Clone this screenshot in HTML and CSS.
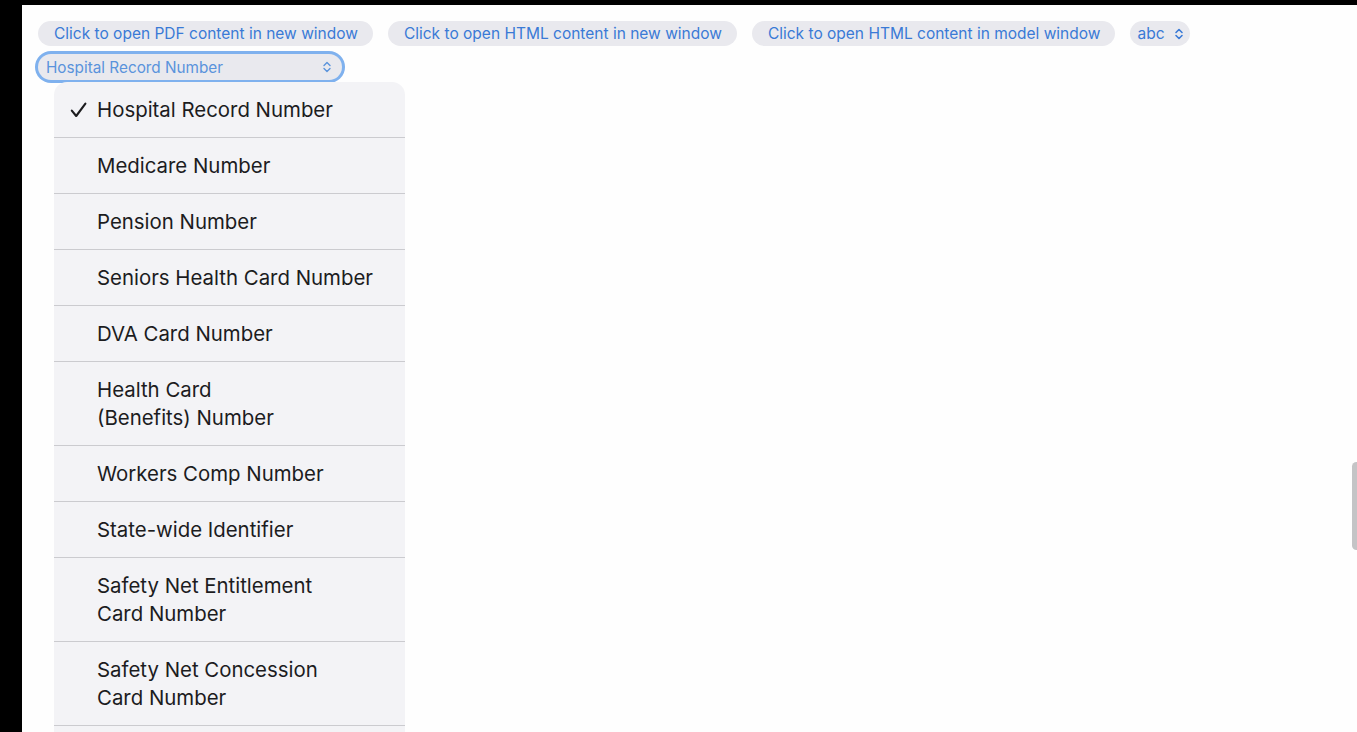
FILE: index.html
```html
<!DOCTYPE html>
<html lang="en">
<head>
    <meta charset="UTF-8">
    <meta name="viewport" content="width=device-width, initial-scale=1.0">
    <title>Patient Identifiers</title>
    <link rel="stylesheet" href="styles.css">
</head>
<body>

    <div class="screen">
        <div class="notch"></div>

        <div class="toolbar">
            <button class="pill">Click to open PDF content in new window</button>
            <button class="pill">Click to open HTML content in new window</button>
            <button class="pill">Click to open HTML content in model window</button>
            <div class="pill small-select">
                abc
                <svg class="chevrons" viewBox="0 0 10 12" width="10" height="12"><path d="M2 4.5 L5 1.5 L8 4.5 M2 7.5 L5 10.5 L8 7.5" fill="none" stroke="currentColor" stroke-width="1.6" stroke-linecap="round" stroke-linejoin="round"/></svg>
            </div>
            <div class="id-select">
                <span>Hospital Record Number</span>
                <svg class="chevrons" viewBox="0 0 10 12" width="10" height="12"><path d="M2 4.5 L5 1.5 L8 4.5 M2 7.5 L5 10.5 L8 7.5" fill="none" stroke="currentColor" stroke-width="1.4" stroke-linecap="round" stroke-linejoin="round"/></svg>
            </div>
        </div>

        <!-- native picker menu, drawn open over the page -->
        <ul class="menu">
            <li class="selected">
                <svg class="check" viewBox="0 0 17 16" width="17" height="16"><path d="M1.8 8.6 L6.2 14 L15.4 1.6" fill="none" stroke="currentColor" stroke-width="2.1" stroke-linecap="round" stroke-linejoin="round"/></svg>
                Hospital Record Number
            </li>
            <li>Medicare Number</li>
            <li>Pension Number</li>
            <li>Seniors Health Card Number</li>
            <li>DVA Card Number</li>
            <li>Health Card<br>(Benefits) Number</li>
            <li>Workers Comp Number</li>
            <li>State-wide Identifier</li>
            <li>Safety Net Entitlement<br>Card Number</li>
            <li>Safety Net Concession<br>Card Number</li>
            <li class="more"></li>
        </ul>

        <div class="scroll-thumb"></div>
    </div>

</body>
</html>
```

FILE: styles.css
```css
html, body {
    margin: 0;
    background-color: #000;
}
body {
    font-family: Inter, "Noto Sans", "Liberation Sans", sans-serif;
    overflow: hidden;
}
.screen {
    position: relative;
    height: 732px;
    box-sizing: border-box;
    border-left: 22px solid #000;
    border-top: 5px solid #000;
    background-color: #fefefe;
    overflow: hidden;
}
.notch {
    position: absolute;
    top: -5px;
    left: 1230px;
    width: 53px;
    height: 3px;
    background-color: #e0313a;
    border-radius: 0 0 6px 6px;
}
.toolbar {
    display: flex;
    flex-wrap: wrap;
    align-items: center;
    column-gap: 15px;
    row-gap: 8px;
    padding: 16px 0 0 16px;
    width: 1200px;
}
.pill {
    height: 25px;
    padding: 0 15px 0 16px;
    border: none;
    border-radius: 13px;
    background-color: #e9e9ee;
    color: #3a7ad6;
    font-family: inherit;
    font-size: 15.5px;
    line-height: 25px;
    white-space: nowrap;
}
.small-select {
    display: flex;
    align-items: center;
    gap: 9px;
    padding: 0 6px 0 7px;
}
.chevrons {
    display: block;
}
.id-select {
    display: flex;
    align-items: center;
    justify-content: space-between;
    width: 304px;
    height: 26px;
    box-sizing: border-box;
    padding: 0 10px 0 8px;
    border-radius: 13px;
    background-color: #e9e9ee;
    box-shadow: 0 0 0 3px #7fb1ee;
    color: #5a93dc;
    font-size: 15.3px;
}
.menu {
    position: absolute;
    top: 77px;
    left: 32px;
    width: 351px;
    margin: 0;
    padding: 0;
    list-style: none;
    background-color: #f3f3f6;
    border-radius: 13px 13px 0 0;
    color: #1c1c1e;
    font-size: 20.4px;
}
.menu li {
    position: relative;
    padding: 14px 0 13px 43px;
    line-height: 28px;
    border-bottom: 1px solid #cbcbcf;
}
.menu li.more {
    height: 28px;
}
.check {
    position: absolute;
    left: 16px;
    top: 20px;
}
.scroll-thumb {
    position: absolute;
    top: 457px;
    right: -4px;
    width: 9px;
    height: 88px;
    border-radius: 5px;
    background-color: #c4c4c6;
}
```
